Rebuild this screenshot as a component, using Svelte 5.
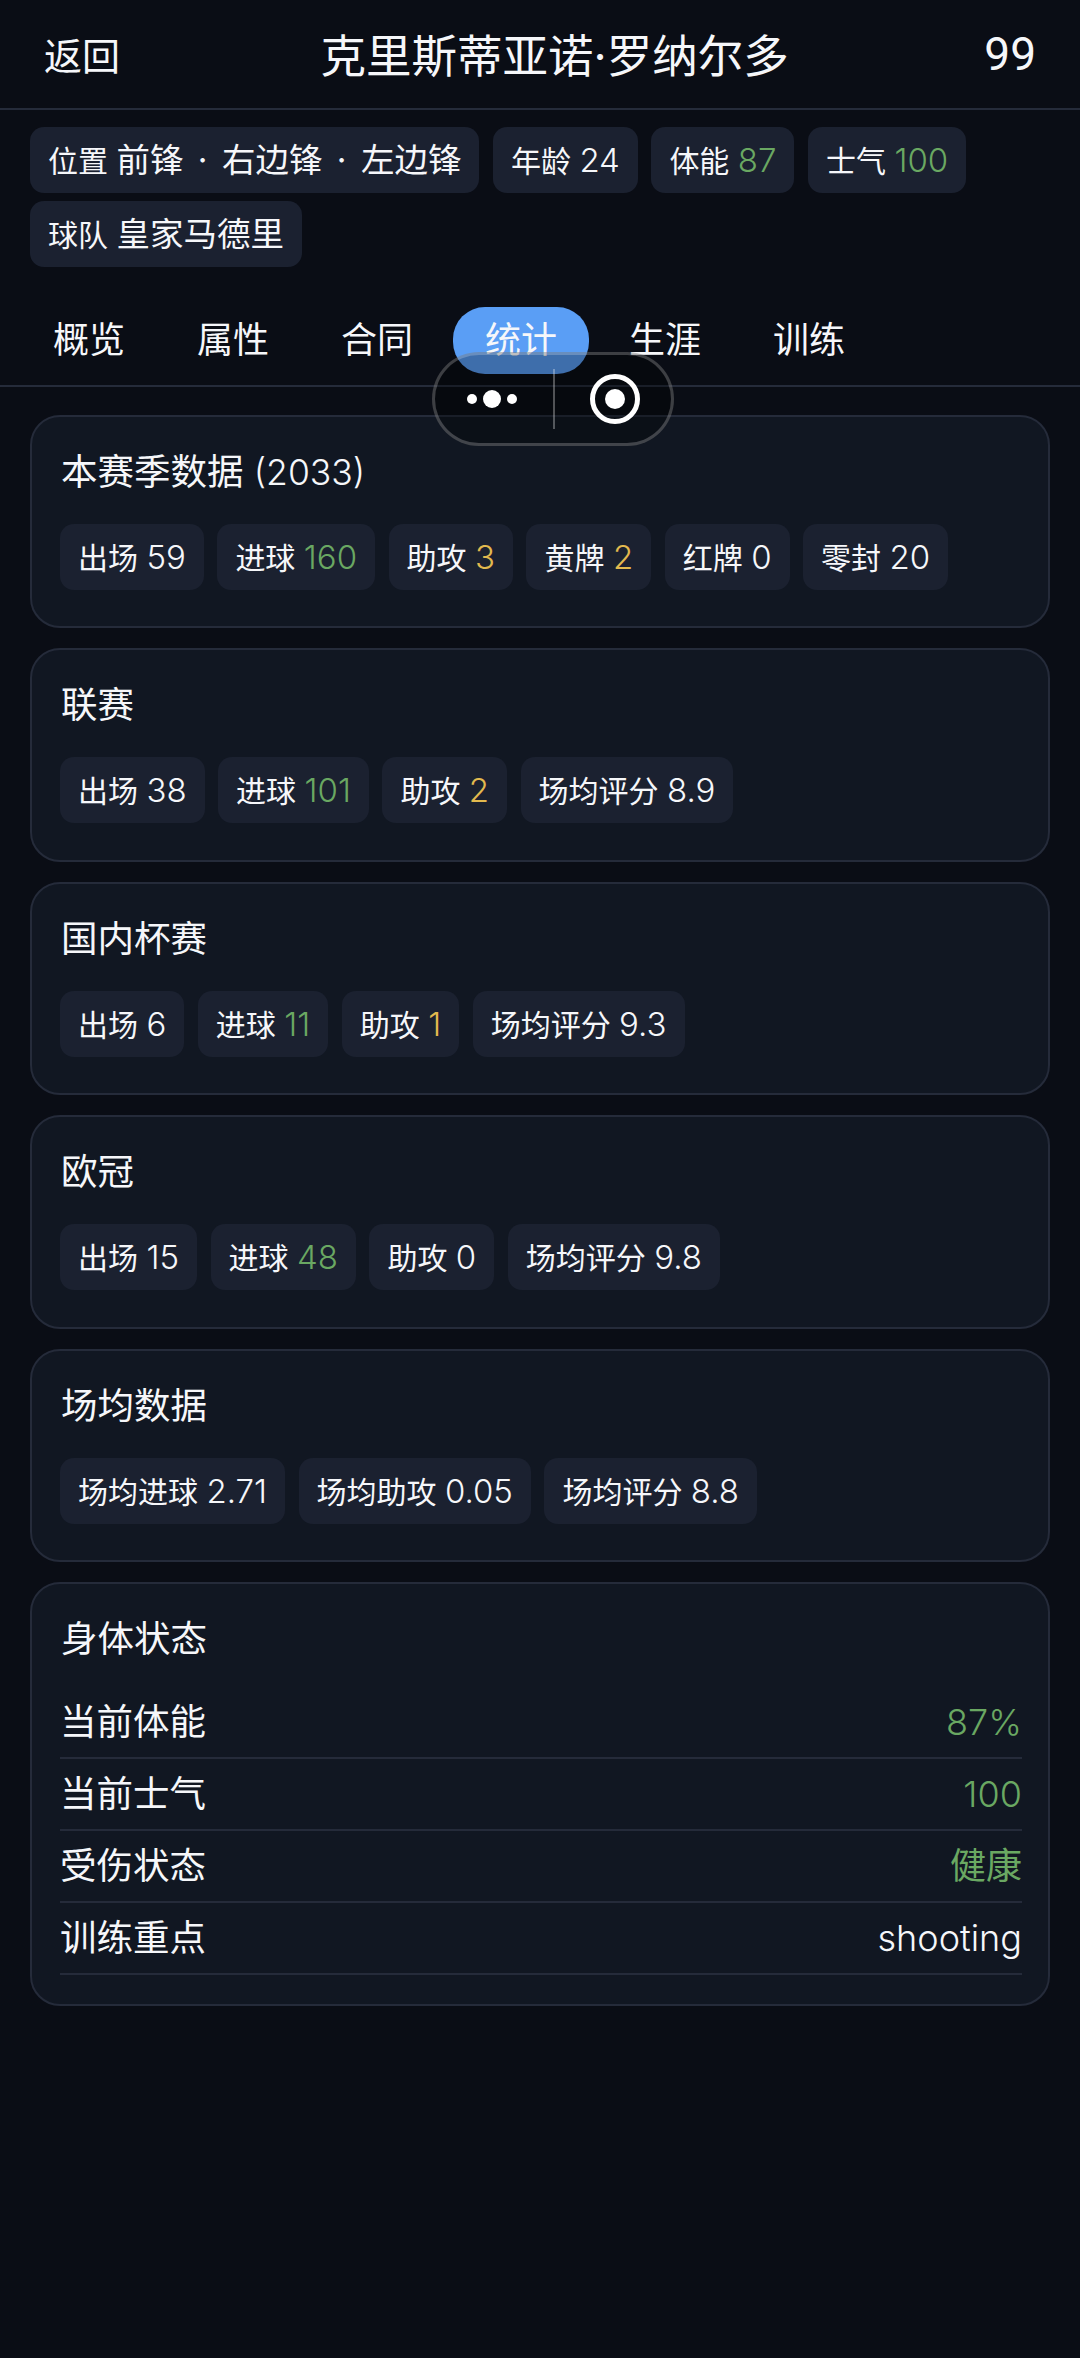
<script>
  const G = 'good'
  const Y = 'warn'
  const topChips = [
    { k: '位置', v: '前锋 · 右边锋 · 左边锋', c: 'text' },
    { k: '年龄', v: '24' },
    { k: '体能', v: '87', c: G },
    { k: '士气', v: '100', c: G },
    { k: '球队', v: '皇家马德里', c: 'text' }
  ]
  const tabs = ['概览', '属性', '合同', '统计', '生涯', '训练']
  const cards = [
    {
      title: '本赛季数据',
      year: '(2033)',
      chips: [
        { k: '出场', v: '59' },
        { k: '进球', v: '160', c: G },
        { k: '助攻', v: '3', c: Y },
        { k: '黄牌', v: '2', c: Y },
        { k: '红牌', v: '0' },
        { k: '零封', v: '20' }
      ]
    },
    {
      title: '联赛',
      chips: [
        { k: '出场', v: '38' },
        { k: '进球', v: '101', c: G },
        { k: '助攻', v: '2', c: Y },
        { k: '场均评分', v: '8.9' }
      ]
    },
    {
      title: '国内杯赛',
      chips: [
        { k: '出场', v: '6' },
        { k: '进球', v: '11', c: G },
        { k: '助攻', v: '1', c: Y },
        { k: '场均评分', v: '9.3' }
      ]
    },
    {
      title: '欧冠',
      chips: [
        { k: '出场', v: '15' },
        { k: '进球', v: '48', c: G },
        { k: '助攻', v: '0' },
        { k: '场均评分', v: '9.8' }
      ]
    },
    {
      title: '场均数据',
      chips: [
        { k: '场均进球', v: '2.71' },
        { k: '场均助攻', v: '0.05' },
        { k: '场均评分', v: '8.8' }
      ]
    }
  ]
  const rows = [
    { k: '当前体能', v: '87%', c: G },
    { k: '当前士气', v: '100', c: G },
    { k: '受伤状态', v: '健康', c: G, cn: true },
    { k: '训练重点', v: 'shooting' }
  ]
</script>

{#snippet chip(item)}
  <span class="chip">{item.k} <span class="val {item.c ?? ''}">{item.v}</span></span>
{/snippet}

<div class="page">
  <header class="head">
    <span class="back">返回</span>
    <span class="name">克里斯蒂亚诺·罗纳尔多</span>
    <span class="rating">99</span>
  </header>

  <div class="chips top">
    {#each topChips as item}
      {@render chip(item)}
    {/each}
  </div>

  <nav class="tabs">
    {#each tabs as tab}
      <span class="tab" class:active={tab === '统计'}>{tab}</span>
    {/each}
  </nav>

  <main class="list">
    {#each cards as card}
      <section class="card">
        <h2>{card.title}{#if card.year}{' '}<span class="year">{card.year}</span>{/if}</h2>
        <div class="chips">
          {#each card.chips as item}
            {@render chip(item)}
          {/each}
        </div>
      </section>
    {/each}

    <section class="card status">
      <h2 class="tight">身体状态</h2>
      {#each rows as row}
        <div class="row">
          <span>{row.k}</span>
          <span class="row-val {row.c ?? ''}" class:cn={row.cn}>{row.v}</span>
        </div>
      {/each}
    </section>
  </main>

  <!-- mini program capsule, floats over the page -->
  <div class="capsule">
    <svg class="cap-icon" width="118" height="94" viewBox="0 0 118 94">
      <circle cx="37" cy="47" r="5" fill="#fff" />
      <circle cx="57" cy="47" r="9" fill="#fff" />
      <circle cx="77" cy="47" r="5" fill="#fff" />
    </svg>
    <span class="cap-line"></span>
    <svg class="cap-icon" width="118" height="94" viewBox="0 0 118 94">
      <circle cx="60" cy="47" r="22.5" fill="none" stroke="#fff" stroke-width="5" />
      <circle cx="60" cy="47" r="10" fill="#fff" />
    </svg>
  </div>
</div>

<style>
  :global(body) {
    background: #0a0d15;
  }

  .page {
    position: relative;
    min-height: 2358px;
    color: #f6f7fa;
    background: #0a0d15;
    font-family: "Inter", "Noto Sans CJK SC", sans-serif;
  }

  .head {
    display: flex;
    align-items: center;
    justify-content: space-between;
    box-sizing: border-box;
    height: 110px;
    padding: 0 44px 2px;
    border-bottom: 2px solid #252b3a;
  }

  .back {
    font-size: 38px;
  }

  .name {
    margin-left: 5px;
    font-size: 45.5px;
  }

  .rating {
    padding-top: 2px;
    font-family: "Roboto", sans-serif;
    font-size: 46px;
  }

  .chips {
    display: flex;
    flex-wrap: wrap;
    gap: 8px 13.5px;
  }

  .top {
    padding: 17px 30px 0;
  }

  .chip {
    display: inline-block;
    height: 66px;
    padding: 0 18px;
    border-radius: 14px;
    background: #1b2130;
    font-size: 30px;
    line-height: 66px;
    white-space: pre;
  }

  .val {
    font-size: 33px;
    font-weight: 350;
  }

  .text {
    font-size: 33.5px;
    font-weight: 400;
    word-spacing: 5px;
  }

  .good {
    color: #6aa862;
  }

  .warn {
    color: #e2b94e;
  }

  .tabs {
    display: flex;
    gap: 8px;
    height: 80px;
    box-sizing: border-box;
    margin-top: 40px;
    padding-left: 21px;
    border-bottom: 2px solid #252b3a;
  }

  .tab {
    height: 67px;
    padding: 0 32px;
    border-radius: 32px;
    font-size: 36px;
    line-height: 67px;
  }

  .active {
    background: #5a9ef5;
  }

  .list {
    display: flex;
    flex-direction: column;
    gap: 20px;
    padding: 28px 30px 0;
  }

  .card {
    box-sizing: border-box;
    min-height: 213.4px;
    padding: 30px 28px;
    border: 2px solid #252b3a;
    border-radius: 30px;
    background: #111722;
  }

  .status {
    padding-right: 26px;
    padding-bottom: 29px;
  }

  h2 {
    height: 48px;
    margin: 0 0 29px;
    padding-left: 1px;
    font-size: 36.5px;
    font-weight: 400;
    line-height: 51px;
  }

  .tight {
    margin-bottom: 25px;
  }

  .year {
    font-size: 35.5px;
    font-weight: 350;
  }

  .row {
    display: flex;
    justify-content: space-between;
    height: 72px;
    box-sizing: border-box;
    border-bottom: 2px solid #252b3a;
    font-size: 36.5px;
    line-height: 71px;
  }

  .row-val {
    font-size: 36px;
    font-weight: 350;
  }

  .cn {
    font-weight: 400;
  }

  .capsule {
    position: absolute;
    top: 352px;
    left: 432px;
    display: flex;
    align-items: center;
    box-sizing: border-box;
    width: 242px;
    height: 94px;
    border: 3px solid rgba(255, 255, 255, 0.22);
    border-radius: 47px;
    background: rgba(0, 0, 0, 0.3);
  }

  .cap-icon {
    flex: none;
    margin: -3px 0;
  }

  .cap-line {
    flex: none;
    width: 2px;
    height: 60px;
    background: rgba(255, 255, 255, 0.3);
  }
</style>
